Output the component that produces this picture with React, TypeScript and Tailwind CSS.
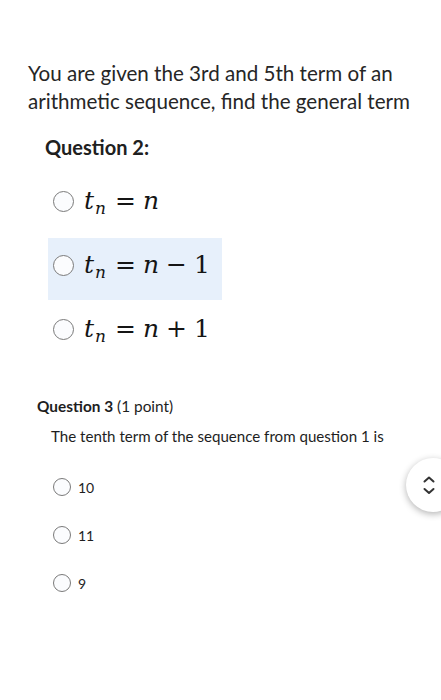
import React from 'react';

const Radio: React.FC<{ size: string }> = ({ size }) => (
    <span className={`${size} shrink-0 rounded-full border border-[#7a7a7a] bg-[#fbfcfe]`} />
);

const MathOption: React.FC<{ rest?: string; sign?: string }> = ({ rest, sign }) => (
    <span className="flex items-baseline text-[25px] text-[#151515]" style={{ fontFamily: '"DejaVu Serif", "Liberation Serif", serif' }}>
        <span className="italic">t</span>
        <span className="italic text-[17px] translate-y-[5px] ml-[1px]">n</span>
        <span className="ml-[9px] mr-[7px]">=</span>
        <span className="italic">n</span>
        {sign && <span className="ml-[7px] mr-[7px]">{sign}</span>}
        {rest && <span>{rest}</span>}
    </span>
);

const App: React.FC = () => {
    const options = [
        { sign: undefined, rest: undefined, active: false },
        { sign: '\u2212', rest: '1', active: true },
        { sign: '+', rest: '1', active: false },
    ];

    return (
        <div className="w-[441px] h-[700px] bg-white overflow-hidden relative" style={{ fontFamily: 'Lato, "Open Sans", sans-serif' }}>
            {/* Question 2 block */}
            <div className="pt-[59px] pl-[28px] pr-2">
                <p className="text-[20.6px] leading-[28px] text-[#262626]">
                    You are given the 3rd and 5th term of an arithmetic sequence, find the general term
                </p>
            </div>
            <h3 className="mt-[18px] ml-[45px] text-[20px] font-bold text-[#202020] leading-[28px]">Question 2:</h3>

            <div className="mt-[13px] ml-[48px] w-[174px] flex flex-col gap-[2px]">
                {options.map((o, i) => (
                    <div key={i} className={`h-[62px] flex items-center pl-[5px] pb-[8px] gap-[10px] ${o.active ? 'bg-[#e7f0fb]' : ''}`}>
                        <Radio size="w-[21px] h-[21px]" />
                        <MathOption sign={o.sign} rest={o.rest} />
                    </div>
                ))}
            </div>

            {/* Question 3 block */}
            <div className="mt-[31px] ml-[37px] text-[15px] text-[#1e1e1e]">
                <p className="leading-[22px] text-[15.4px]"><span className="font-bold">Question 3</span> (1 point)</p>
                <p className="mt-[8px] ml-[14px] leading-[22px] text-[15.1px]">The tenth term of the sequence from question 1 is</p>
                <div className="mt-[16px] ml-[16px] flex flex-col">
                    {['10', '11', '9'].map(v => (
                        <label key={v} className="h-[48px] flex items-center gap-[7px]">
                            <Radio size="w-[18px] h-[18px]" />
                            <span className="text-[14px]">{v}</span>
                        </label>
                    ))}
                </div>
            </div>

            {/* scroll nav button */}
            <div className="absolute left-[406px] top-[458px] w-[54px] h-[54px] rounded-full bg-white shadow-[0_2px_7px_rgba(0,0,0,0.3)] flex items-center pl-[17px]">
                <svg width="12" height="24" viewBox="0 0 12 24" fill="none" stroke="#333" strokeWidth="2" strokeLinecap="round" strokeLinejoin="round">
                    <path d="M1.5 8.5l4.5-4 4.5 4" />
                    <path d="M1.5 16l4.5 4 4.5-4" />
                </svg>
            </div>
        </div>
    );
};

export default App;
